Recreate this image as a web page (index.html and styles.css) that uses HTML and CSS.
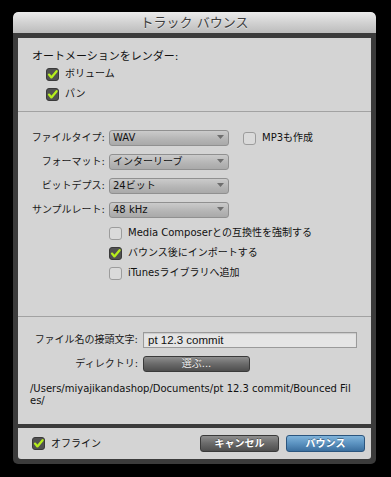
FILE: index.html
```html
<!DOCTYPE html>
<html lang="ja">
<head>
<meta charset="utf-8">
<title>トラック バウンス</title>
<link rel="stylesheet" href="styles.css">
</head>
<body>
<div class="dialog">
  <div class="titlebar">トラック バウンス</div>
  <div class="dialog-body">
    <div class="panel main">
      <section class="sec sec-automation">
        <div class="heading">オートメーションをレンダー:</div>
        <div class="check-row indent">
          <svg class="cb" viewBox="0 0 13 13"><rect class="box-on" x="0.5" y="0.5" width="12" height="12" rx="2.5"/><path class="tick" d="M3 6.6 L5.4 9.4 L10.6 3.2"/></svg>
          <span>ボリューム</span>
        </div>
        <div class="check-row indent">
          <svg class="cb" viewBox="0 0 13 13"><rect class="box-on" x="0.5" y="0.5" width="12" height="12" rx="2.5"/><path class="tick" d="M3 6.6 L5.4 9.4 L10.6 3.2"/></svg>
          <span>パン</span>
        </div>
      </section>

      <section class="sec sec-format">
        <div class="format-grid">
          <span class="lbl">ファイルタイプ:</span>
          <div class="select"><span>WAV</span><svg class="arrow" viewBox="0 0 7 4"><path d="M0 0 H7 L3.5 4 Z"/></svg></div>
          <div class="check-row mp3">
            <svg class="cb" viewBox="0 0 13 13"><rect class="box-off" x="0.5" y="0.5" width="12" height="12" rx="2.5"/></svg>
            <span>MP3も作成</span>
          </div>

          <span class="lbl">フォーマット:</span>
          <div class="select"><span>インターリーブ</span><svg class="arrow" viewBox="0 0 7 4"><path d="M0 0 H7 L3.5 4 Z"/></svg></div>
          <span></span>

          <span class="lbl">ビットデプス:</span>
          <div class="select"><span>24ビット</span><svg class="arrow" viewBox="0 0 7 4"><path d="M0 0 H7 L3.5 4 Z"/></svg></div>
          <span></span>

          <span class="lbl">サンプルレート:</span>
          <div class="select"><span>48 kHz</span><svg class="arrow" viewBox="0 0 7 4"><path d="M0 0 H7 L3.5 4 Z"/></svg></div>
          <span></span>
        </div>
        <div class="checks">
          <div class="check-row">
            <svg class="cb" viewBox="0 0 13 13"><rect class="box-off" x="0.5" y="0.5" width="12" height="12" rx="2.5"/></svg>
            <span>Media Composerとの互換性を強制する</span>
          </div>
          <div class="check-row">
            <svg class="cb" viewBox="0 0 13 13"><rect class="box-on" x="0.5" y="0.5" width="12" height="12" rx="2.5"/><path class="tick" d="M3 6.6 L5.4 9.4 L10.6 3.2"/></svg>
            <span>バウンス後にインポートする</span>
          </div>
          <div class="check-row">
            <svg class="cb" viewBox="0 0 13 13"><rect class="box-off" x="0.5" y="0.5" width="12" height="12" rx="2.5"/></svg>
            <span>iTunesライブラリへ追加</span>
          </div>
        </div>
      </section>

      <section class="sec sec-output">
        <div class="output-grid">
          <span class="lbl">ファイル名の接頭文字:</span>
          <div class="input">pt 12.3 commit</div>
          <span class="lbl">ディレクトリ:</span>
          <div class="btn btn-dark btn-choose">選ぶ...</div>
        </div>
        <div class="path">/Users/miyajikandashop/Documents/pt 12.3 commit/Bounced Fil<br>es/</div>
      </section>
    </div>

    <div class="panel footer">
      <div class="check-row">
        <svg class="cb" viewBox="0 0 13 13"><rect class="box-on" x="0.5" y="0.5" width="12" height="12" rx="2.5"/><path class="tick" d="M3 6.6 L5.4 9.4 L10.6 3.2"/></svg>
        <span>オフライン</span>
      </div>
      <div class="actions">
        <div class="btn btn-dark">キャンセル</div>
        <div class="btn btn-blue">バウンス</div>
      </div>
    </div>
  </div>
</div>
</body>
</html>
```

FILE: styles.css
```css
* { box-sizing: border-box; }

html, body {
  margin: 0;
  padding: 0;
  background: #000;
}

body {
  width: 391px;
  height: 477px;
  overflow: hidden;
  font-family: "DejaVu Sans", "Noto Sans CJK JP", sans-serif;
  font-size: 10px;
  color: #111;
  padding: 12px 0 0 13px;
}

.dialog {
  width: 363px;
  height: 452px;
  background: #3b3b3b;
  border-radius: 5px;
  display: flex;
  flex-direction: column;
  overflow: hidden;
}

.titlebar {
  height: 21px;
  line-height: 21px;
  text-align: center;
  font-size: 13px;
  color: #3e3e3e;
  text-shadow: 0 1px 0 rgba(255,255,255,0.55);
  background: linear-gradient(#ececec, #d2d2d2 50%, #bcbcbc);
  border-radius: 5px 5px 0 0;
}

.dialog-body {
  padding: 5px;
  display: flex;
  flex-direction: column;
  gap: 4px;
}

.panel {
  background: #d4d4d4;
}

.main {
  height: 386px;
  display: flex;
  flex-direction: column;
}

.sec {
  border-bottom: 1px solid #a2a2a2;
}

.sec-automation {
  padding: 12px 14px 7px;
}

.heading {
  line-height: 14px;
  height: 14px;
  font-size: 11px;
  color: #111;
}

.check-row {
  display: flex;
  align-items: center;
  gap: 6px;
  height: 20px;
  line-height: 14px;
  white-space: nowrap;
}

.indent { padding-left: 14px; }

.cb {
  width: 13px;
  height: 13px;
  flex: none;
}

.box-on {
  fill: #515151;
  stroke: #3a3a3a;
  stroke-width: 1;
}

.box-off {
  fill: #dadada;
  stroke: #9c9c9c;
  stroke-width: 1;
}

.tick {
  fill: none;
  stroke: #b6ee1c;
  stroke-width: 2.3;
  stroke-linecap: round;
  stroke-linejoin: round;
}

.sec-format {
  padding: 18px 0 33px;
}

.format-grid {
  display: grid;
  grid-template-columns: 87px 120px 1fr;
  grid-auto-rows: 16px;
  column-gap: 4px;
  row-gap: 8px;
  align-items: center;
}

.lbl {
  text-align: right;
  line-height: 16px;
  color: #1a1a1a;
  white-space: nowrap;
}

.select {
  height: 16px;
  border: 1px solid #909090;
  border-radius: 3px;
  background: linear-gradient(#cbcbcb, #b4b4b4 60%, #a9a9a9);
  display: flex;
  align-items: center;
  justify-content: space-between;
  padding: 0 4px 0 3px;
  line-height: 14px;
  color: #111;
}

.arrow {
  width: 7px;
  height: 4px;
  fill: #6e6e6e;
  margin-top: -3px;
}

.mp3 {
  padding-left: 10px;
  height: 16px;
}

.checks {
  margin: 5px 0 0 91px;
}

.sec-output {
  flex: 1;
  border-bottom: none;
  padding-top: 15px;
}

.output-grid {
  display: grid;
  grid-template-columns: 120px 214px;
  grid-auto-rows: 16px;
  column-gap: 5px;
  row-gap: 8px;
  align-items: center;
}

.input {
  height: 16px;
  background: #e5e5e5;
  border: 1px solid #9a9a9a;
  box-shadow: inset 0 1px 1px rgba(0,0,0,0.12);
  padding: 0 4px;
  font-family: "Liberation Sans", sans-serif;
  font-size: 11.5px;
  line-height: 14px;
  color: #111;
}

.btn {
  height: 17px;
  border-radius: 3px;
  display: flex;
  align-items: center;
  justify-content: center;
  color: #fff;
  font-weight: bold;
  line-height: 14px;
  text-shadow: 0 -1px 0 rgba(0,0,0,0.35);
}

.btn-dark {
  background: linear-gradient(#8e8e8e, #6a6a6a 50%, #4e4e4e);
  border: 1px solid #3a3a3a;
}

.btn-blue {
  background: linear-gradient(#7fb3da, #5b92c0 50%, #3b6f9e);
  border: 1px solid #2b557e;
}

.btn-choose {
  width: 107px;
  height: 16px;
  font-weight: normal;
  color: #f0f0f0;
}

.path {
  margin: 11px 0 0 12px;
  line-height: 12px;
  color: #111;
  white-space: nowrap;
}

.footer {
  height: 31px;
  display: flex;
  align-items: center;
  padding: 0 6px 0 14px;
  border-radius: 0 0 3px 3px;
}

.actions {
  margin-left: auto;
  display: flex;
  gap: 7px;
}

.actions .btn {
  width: 79px;
}
```
